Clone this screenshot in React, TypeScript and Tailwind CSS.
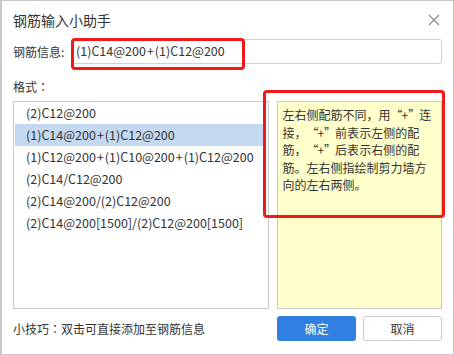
import React from "react";

const formats = [
  "(2)C12@200",
  "(1)C14@200+(1)C12@200",
  "(1)C12@200+(1)C10@200+(1)C12@200",
  "(2)C14/C12@200",
  "(2)C14@200/(2)C12@200",
  "(2)C14@200[1500]/(2)C12@200[1500]",
];

const tipLines = [
  "左右侧配筋不同，用“+”连",
  "接，“+”前表示左侧的配",
  "筋，“+”后表示右侧的配",
  "筋。左右侧指绘制剪力墙方",
  "向的左右两侧。",
];

// the "+" in the reference font is wider than in ours
function Rebar({ text }: { text: string }) {
  const parts = text.split("+");
  return (
    <>
      {parts.map((p, i) => (
        <React.Fragment key={i}>
          {i > 0 && <span className="mx-[1px]">+</span>}
          {p}
        </React.Fragment>
      ))}
    </>
  );
}

// full-width quotes like the original font
function TipLine({ text }: { text: string }) {
  return (
    <div className="whitespace-nowrap">
      {Array.from(text).map((ch, i) =>
        ch === "“" ? (
          <span key={i} className="inline-block w-[11px] text-right">“</span>
        ) : ch === "”" ? (
          <span key={i} className="inline-block w-[11px] text-left">”</span>
        ) : (
          <React.Fragment key={i}>{ch}</React.Fragment>
        )
      )}
    </div>
  );
}

const Colon = () => (
  <span style={{ fontFamily: '"Noto Sans CJK TC", sans-serif' }}>：</span>
);

export default function App() {
  const selected = 1;

  return (
    <div
      className="relative w-[454px] h-[355px] bg-white border border-[#c8c8c8] border-l-2 px-[11px] text-[12px] text-[#333]"
      style={{ fontFamily: '"Microsoft YaHei", "Noto Sans CJK SC", sans-serif' }}
    >
      {/* title bar */}
      <div className="flex items-center justify-between h-[38px]">
        <span className="text-[14px] text-[#333]">钢筋输入小助手</span>
        <svg width="12" height="12" viewBox="0 0 12 12" className="mr-[2px]">
          <path d="M1 1 L11 11 M11 1 L1 11" stroke="#8c8c8c" strokeWidth="1.2" />
        </svg>
      </div>

      {/* input row */}
      <div className="flex items-center h-[25px]">
        <span className="w-[58px] shrink-0">钢筋信息:</span>
        <div className="flex-1 h-[25px] flex items-center border border-[#d0d0d0] rounded-[3px] px-[4px] text-[12.5px] text-[#333]">
          <Rebar text="(1)C14@200+(1)C12@200" />
        </div>
      </div>

      <div className="mt-[14px] h-[17px] leading-[17px]">
        格式<Colon />
      </div>

      {/* lists */}
      <div className="mt-[6px] flex gap-[8px] h-[208px]">
        <div className="w-[257px] border border-[#c8c8c8] pl-[1px] pr-[5px] text-[12.5px]">
          {formats.map((f, i) => (
            <div
              key={f}
              className={
                "h-[22px] leading-[22px] pl-[11px] whitespace-nowrap " +
                (i === selected ? "bg-[#c4d9f0]" : "")
              }
            >
              <Rebar text={f} />
            </div>
          ))}
        </div>
        <div className="w-[165px] border border-[#c8c8c8] bg-[#ffffcc] pt-[4px] pl-[4px] leading-[17.5px]">
          {tipLines.map((l) => (
            <TipLine key={l} text={l} />
          ))}
        </div>
      </div>

      {/* footer */}
      <div className="mt-[7px] flex items-center h-[25px]">
        <span className="flex-1">
          小技巧<Colon />双击可直接添加至钢筋信息
        </span>
        <button className="w-[79px] h-[25px] rounded-[3px] bg-[#2f80e0] text-white text-[12px]">确定</button>
        <button className="ml-[7px] w-[79px] h-[25px] rounded-[3px] border border-[#cccccc] bg-white text-[12px] text-[#333]">
          取消
        </button>
      </div>

      {/* annotation boxes */}
      <div className="absolute left-[69px] top-[37px] w-[174px] h-[32px] border-[3px] border-[#ee1b1b] rounded-[4px]" />
      <div className="absolute left-[261px] top-[89px] w-[182px] h-[128px] border-[3px] border-[#ee1b1b] rounded-[4px]" />
    </div>
  );
}
